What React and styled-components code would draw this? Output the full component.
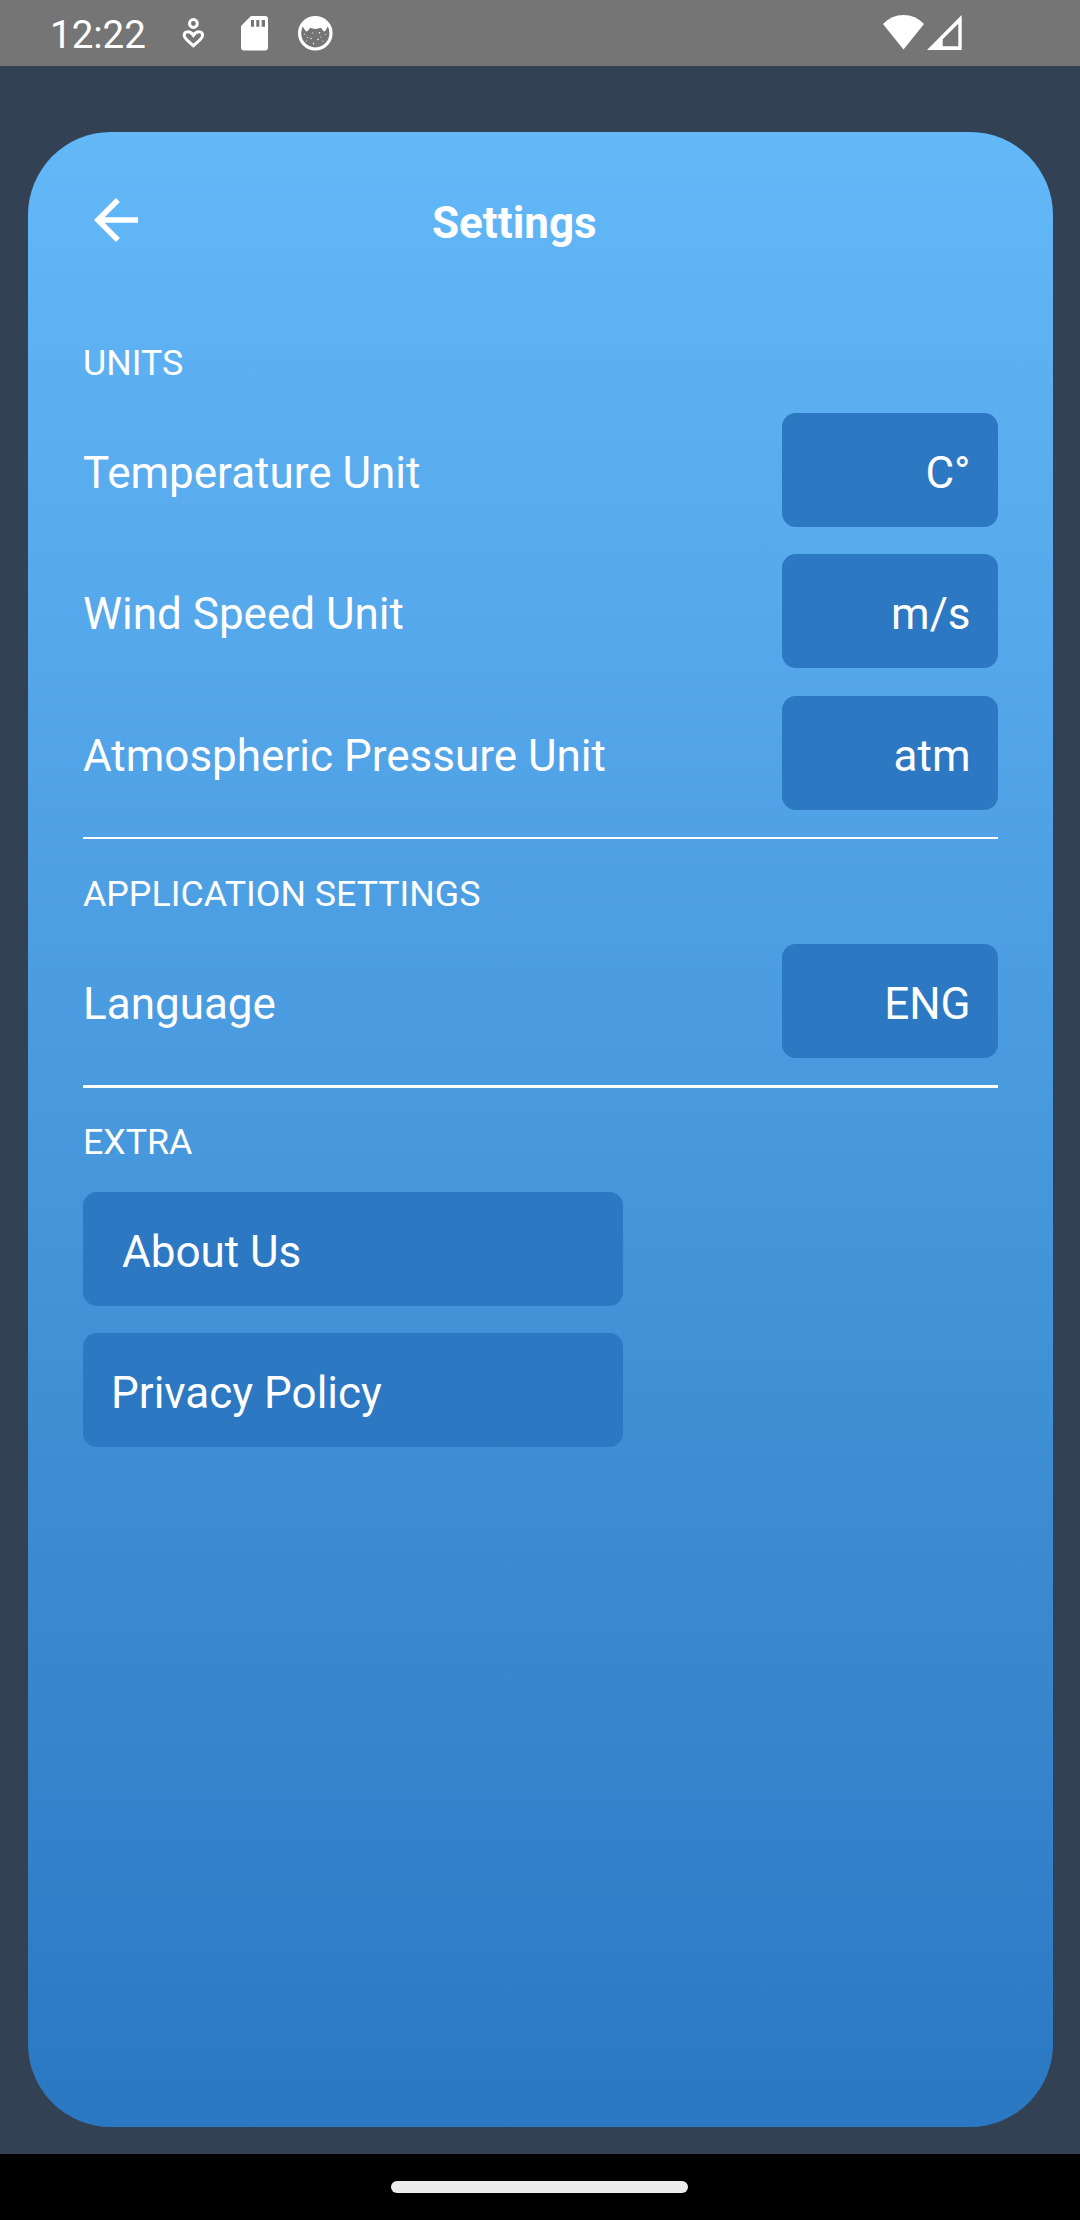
import React from 'react';
import styled, { createGlobalStyle } from 'styled-components';

const GlobalStyle = createGlobalStyle`
  * { box-sizing: border-box; }
  html, body { margin: 0; padding: 0; }
  body { background: #000; font-family: Roboto, "Noto Sans", sans-serif; color: #fff; }
`;

const Screen = styled.div`
  width: 1080px;
  height: 2220px;
  display: flex;
  flex-direction: column;
  background: #334155;
  overflow: hidden;
`;

const StatusBar = styled.header`
  height: 66px;
  flex: none;
  display: flex;
  justify-content: space-between;
  padding: 0 118px 0 50px;
  background: #757575;
`;

const StatusGroup = styled.div`
  display: flex;
  align-items: flex-start;
`;

const Clock = styled.span`
  width: 131px;
  padding-top: 11px;
  font-size: 38.5px;
  line-height: 48px;
`;

const StatusIcon = styled.svg`
  display: block;
  flex: none;
  height: 66px;
  width: ${(p) => p.$width}px;
  margin-left: ${(p) => p.$gap || 0}px;
`;

const Main = styled.main`
  flex: 1;
  padding: 66px 27px 27px 28px;
  display: flex;
`;

const Card = styled.section`
  flex: 1;
  padding: 55px 55px 0;
  border-radius: 83px;
  background: linear-gradient(180deg, #63b8f8 0%, #2b78c2 100%);
`;

const TitleBar = styled.div`
  display: flex;
  align-items: flex-start;
  height: 155px;
`;

const BackButton = styled.button`
  flex: none;
  width: 66px;
  height: 66px;
  padding: 0;
  border: 0;
  background: none;
  color: inherit;

  svg { display: block; width: 66px; height: 66px; }
`;

const Title = styled.h1`
  margin: 10px 0 0 283px;
  font-size: 44px;
  font-weight: 700;
  line-height: 52px;
`;

const SectionTitle = styled.h2`
  margin: 0;
  height: 71px;
  font-size: 35.75px;
  font-weight: 400;
  line-height: 42px;
`;

const Stack = styled.div`
  display: flex;
  flex-direction: column;
  gap: 27px;
`;

const Row = styled.div`
  display: flex;
  justify-content: space-between;
  margin-bottom: ${(p) => p.$extra || 0}px;
`;

const Label = styled.span`
  padding-top: 34px;
  font-size: 44px;
  line-height: 52px;
  white-space: nowrap;
`;

const Button = styled.button`
  width: ${(p) => p.$width}px;
  height: 114px;
  padding: 6px 27.5px 0 ${(p) => p.$left || 28}px;
  border: 0;
  border-radius: 14px;
  background: #2c78c2;
  color: inherit;
  font: 400 44px/52px Roboto, "Noto Sans", sans-serif;
  text-align: ${(p) => p.$align};
`;

const Divider = styled.hr`
  height: ${(p) => p.$thickness}px;
  margin: 27px 0 ${(p) => p.$after}px;
  border: 0;
  background: #fff;
`;

const NavBar = styled.footer`
  flex: none;
  height: 66px;
  padding-top: 27px;
  background: #000;
`;

const HomePill = styled.div`
  width: 297px;
  height: 12px;
  margin-left: 391px;
  border-radius: 6px;
  background: #ececec;
`;

const HeartPerson = () => (
  <StatusIcon $width={24} viewBox="181 0 24 66" fill="none" stroke="#fff" strokeWidth="3">
    <circle cx="193.4" cy="23.5" r="3.9" />
    <path d="M193.4 45.8C188 40.8 184.2 38.4 184.2 35.4C184.2 30.8 190.2 30.6 193.4 35.4C196.6 30.6 202.6 30.8 202.6 35.4C202.6 38.4 198.8 40.8 193.4 45.8Z" />
  </StatusIcon>
);

const SdCard = () => (
  <StatusIcon $width={27} $gap={36} viewBox="241 0 27 66">
    <path fill="#fff" d="M251 16H265A3 3 0 0 1 268 19V47.4A3 3 0 0 1 265 50.4H244A3 3 0 0 1 241 47.4V26Z" />
    <path fill="#757575" d="M251 20H254V26.7H251ZM256.3 20H259.3V26.7H256.3ZM261.7 20H265V26.7H261.7Z" />
  </StatusIcon>
);

const CatFace = () => (
  <StatusIcon $width={36} $gap={29} viewBox="297 0 36 66">
    <circle cx="315.3" cy="33.3" r="15.7" fill="none" stroke="#fff" strokeWidth="3.2" />
    <path
      fill="#fff"
      d="M302 25Q307 17 315.3 17Q323.6 17 328.6 25L327 28Q325.5 31.5 324 31.5Q322.500 30.500 321 27.800Q315.3 30 310 27.800Q308.500 30.500 307 31.5Q305.500 31.5 303.600 28Z"
    />
    <g fill="#fff">
      <circle cx="304.5" cy="34" r="0.6" />
      <circle cx="307.5" cy="37.5" r="0.6" />
      <circle cx="306.5" cy="41" r="0.5" />
      <circle cx="311" cy="38.5" r="0.7" />
      <circle cx="312.5" cy="33" r="0.6" />
      <circle cx="313.5" cy="43.5" r="0.7" />
      <circle cx="318" cy="39.5" r="0.8" />
      <circle cx="319.5" cy="32.8" r="0.8" />
      <circle cx="321" cy="37" r="0.6" />
      <circle cx="323" cy="41" r="0.6" />
      <circle cx="325.5" cy="34.5" r="0.6" />
    </g>
  </StatusIcon>
);

const Wifi = () => (
  <StatusIcon $width={41} viewBox="883 0 41 66">
    <path fill="#fff" d="M903.5 49.5L883 24Q891.5 15 903.5 15Q915.5 15 924 24Z" />
  </StatusIcon>
);

const Signal = () => (
  <StatusIcon $width={35} $gap={3} viewBox="927 0 35 66">
    <path
      fill="#fff"
      fillRule="evenodd"
      d="M961.7 15V50H927ZM958.3 23.7L942.7 39.2V46.2H958.3Z"
    />
  </StatusIcon>
);

const units = [
  { label: 'Temperature Unit', value: 'C°' },
  { label: 'Wind Speed Unit', value: 'm/s', extra: 1 },
  { label: 'Atmospheric Pressure Unit', value: 'atm' },
];

const SettingRow = ({ label, value, extra }) => (
  <Row $extra={extra}>
    <Label>{label}</Label>
    <Button $width={216} $align="right">{value}</Button>
  </Row>
);

export default function App() {
  return (
    <>
      <GlobalStyle />
      <Screen>
        <StatusBar>
          <StatusGroup>
            <Clock>12:22</Clock>
            <HeartPerson />
            <SdCard />
            <CatFace />
          </StatusGroup>
          <StatusGroup>
            <Wifi />
            <Signal />
          </StatusGroup>
        </StatusBar>
        <Main>
          <Card>
            <TitleBar>
              <BackButton aria-label="Back">
                <svg viewBox="0 0 24 24" fill="currentColor">
                  <path d="M20 11H7.83l5.59-5.59L12 4l-8 8 8 8 1.41-1.41L7.83 13H20v-2z" />
                </svg>
              </BackButton>
              <Title>Settings</Title>
            </TitleBar>
            <SectionTitle>UNITS</SectionTitle>
            <Stack>
              {units.map((u) => (
                <SettingRow key={u.label} {...u} />
              ))}
            </Stack>
            <Divider $thickness={2} $after={34} />
            <SectionTitle>APPLICATION SETTINGS</SectionTitle>
            <SettingRow label="Language" value="ENG" />
            <Divider $thickness={3} $after={33} />
            <SectionTitle>EXTRA</SectionTitle>
            <Stack>
              <Button $width={540} $left={39} $align="left">About Us</Button>
              <Button $width={540} $left={28} $align="left">Privacy Policy</Button>
            </Stack>
          </Card>
        </Main>
        <NavBar>
          <HomePill />
        </NavBar>
      </Screen>
    </>
  );
}
